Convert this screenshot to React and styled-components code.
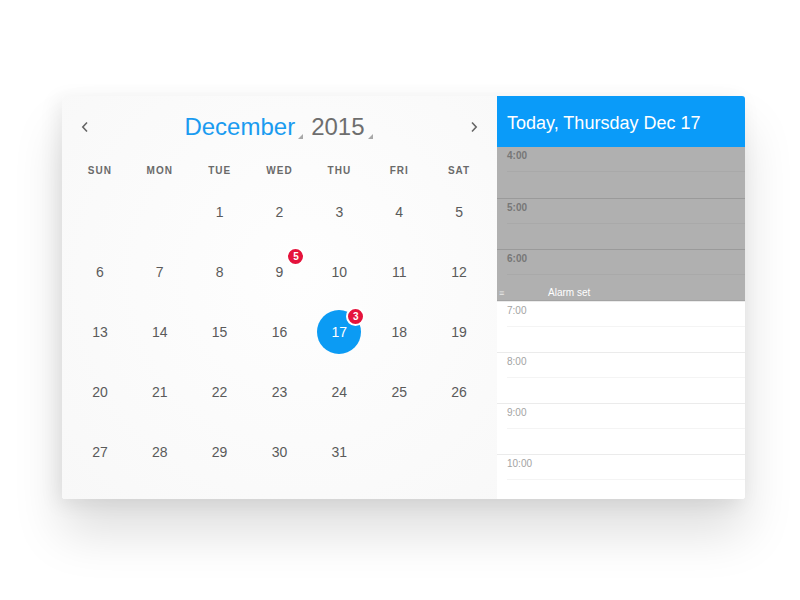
import styled, { createGlobalStyle } from "styled-components";

const GlobalStyle = createGlobalStyle`
  * { box-sizing: border-box; }
  body {
    margin: 0;
    background: #fff;
    font-family: "Liberation Sans", Arial, sans-serif;
  }
`;

const Page = styled.div`
  width: 800px;
  height: 600px;
  padding: 96px 55px 0 62px;
`;

const Card = styled.div`
  display: flex;
  width: 683px;
  height: 403px;
  border-radius: 3px;
  overflow: hidden;
  box-shadow: 0 34px 50px rgba(0, 0, 0, 0.13), -4px 4px 20px rgba(0, 0, 0, 0.08);
`;

const Month = styled.section`
  width: 435px;
  padding: 14px 8px 17px;
  display: flex;
  flex-direction: column;
  background: radial-gradient(circle at 55% 45%, #fefefe 0%, #f8f8f8 100%);
`;

const Nav = styled.div`
  height: 34px;
  display: flex;
  align-items: center;
  justify-content: space-between;
  padding: 0 10px;
`;

const Chevron = styled.button`
  border: 0;
  background: none;
  padding: 0;
  width: 10px;
  height: 14px;
  display: flex;
  align-items: center;
  justify-content: center;
  cursor: pointer;
`;

const Title = styled.div`
  display: flex;
  align-items: baseline;
  gap: 10px;
  font-size: 24px;
  line-height: 34px;
  margin-right: 4px;
`;

const Picker = styled.span`
  position: relative;
  color: ${(p) => p.color};
  padding-right: 6px;

  &::after {
    content: "";
    position: absolute;
    right: -2px;
    bottom: 5px;
    border-left: 5px solid transparent;
    border-bottom: 5px solid #a8a8a8;
  }
`;

const Weekdays = styled.div`
  display: grid;
  grid-template-columns: repeat(7, 1fr);
  height: 20px;
  margin-top: 16px;
  align-items: center;
`;

const Weekday = styled.div`
  text-align: center;
  font-size: 10px;
  font-weight: 700;
  letter-spacing: 1px;
  color: #6a6a6a;
`;

const Days = styled.div`
  display: grid;
  grid-template-columns: repeat(7, 1fr);
  grid-auto-rows: 60px;
  margin-top: 2px;
`;

const Day = styled.div`
  display: flex;
  align-items: center;
  justify-content: center;
`;

const DayMark = styled.div`
  position: relative;
  width: 44px;
  height: 44px;
  border-radius: 50%;
  display: flex;
  align-items: center;
  justify-content: center;
  font-size: 14px;
  color: ${(p) => (p.$selected ? "#fff" : "#5a5a5a")};
  background: ${(p) => (p.$selected ? "#0b9bf4" : "transparent")};
`;

const Badge = styled.span`
  position: absolute;
  top: -3px;
  right: -4px;
  width: 19px;
  height: 19px;
  border-radius: 50%;
  border: 2px solid #fff;
  background: #e5133c;
  color: #fff;
  font-size: 10px;
  font-weight: 700;
  display: flex;
  align-items: center;
  justify-content: center;
`;

const Agenda = styled.section`
  flex: 1;
  background: #fff;
  display: flex;
  flex-direction: column;
  overflow: hidden;
`;

const AgendaHeader = styled.header`
  height: 51px;
  flex-shrink: 0;
  background: #0a9bf9;
  color: #fff;
  font-size: 18px;
  display: flex;
  align-items: center;
  padding: 3px 10px 0;
`;

const Event = styled.div`
  flex-shrink: 0;
  background: #b0b0b0;
  border-bottom: 1px solid #a4a4a4;
`;

const Slot = styled.div`
  flex-shrink: 0;
  height: 51px;
  border-top: 1px solid ${(p) => (p.$dim ? "#9a9a9a" : "#ebebeb")};
  display: grid;
  grid-template-rows: 25px 1fr;

  &:first-child {
    border-top: 0;
  }
`;

const SlotTop = styled.div`
  margin-left: 10px;
  padding-top: 3px;
  border-bottom: 1px solid ${(p) => (p.$dim ? "#a9a9a9" : "#f4f4f4")};
  font-size: 10px;
  font-weight: ${(p) => (p.$dim ? 700 : 400)};
  color: ${(p) => (p.$dim ? "#777" : "#a3a3a3")};
`;

const SlotBottom = styled.div`
  display: flex;
  align-items: flex-end;
`;

const AlarmRow = styled.div`
  display: flex;
  align-items: center;
  height: 15px;
  padding-left: 2px;
  color: #fff;
  font-size: 10px;
  width: 100%;
`;

const Grip = styled.span`
  width: 5px;
  font-size: 9px;
  color: #e8e8e8;
  margin-right: 44px;
`;

const weekdays = ["SUN", "MON", "TUE", "WED", "THU", "FRI", "SAT"];
const badges = { 9: 5, 17: 3 };

const ChevronIcon = ({ dir }) => (
  <svg width="8" height="12" viewBox="0 0 8 12">
    <path
      d={dir === "left" ? "M6 1.5 1.8 6 6 10.5" : "M2 1.5 6.2 6 2 10.5"}
      fill="none"
      stroke="#666"
      strokeWidth="1.6"
    />
  </svg>
);

export default function App() {
  const cells = [];
  for (let i = 0; i < 2; i++) cells.push(null);
  for (let d = 1; d <= 31; d++) cells.push(d);

  return (
    <>
      <GlobalStyle />
      <Page>
        <Card>
          <Month>
            <Nav>
              <Chevron aria-label="previous">
                <ChevronIcon dir="left" />
              </Chevron>
              <Title>
                <Picker color="#1a9bf0">December</Picker>
                <Picker color="#6e6e6e">2015</Picker>
              </Title>
              <Chevron aria-label="next">
                <ChevronIcon dir="right" />
              </Chevron>
            </Nav>
            <Weekdays>
              {weekdays.map((w) => (
                <Weekday key={w}>{w}</Weekday>
              ))}
            </Weekdays>
            <Days>
              {cells.map((d, i) => (
                <Day key={i}>
                  {d && (
                    <DayMark $selected={d === 17}>
                      {d}
                      {badges[d] && <Badge>{badges[d]}</Badge>}
                    </DayMark>
                  )}
                </Day>
              ))}
            </Days>
          </Month>
          <Agenda>
            <AgendaHeader>Today, Thursday Dec 17</AgendaHeader>
            <Event>
              <Slot $dim>
                <SlotTop $dim>4:00</SlotTop>
                <SlotBottom />
              </Slot>
              <Slot $dim>
                <SlotTop $dim>5:00</SlotTop>
                <SlotBottom />
              </Slot>
              <Slot $dim>
                <SlotTop $dim>6:00</SlotTop>
                <SlotBottom>
                  <AlarmRow>
                    <Grip>≡</Grip>
                    Alarm set
                  </AlarmRow>
                </SlotBottom>
              </Slot>
            </Event>
            {["7:00", "8:00", "9:00", "10:00"].map((t) => (
              <Slot key={t}>
                <SlotTop>{t}</SlotTop>
                <SlotBottom />
              </Slot>
            ))}
          </Agenda>
        </Card>
      </Page>
    </>
  );
}
